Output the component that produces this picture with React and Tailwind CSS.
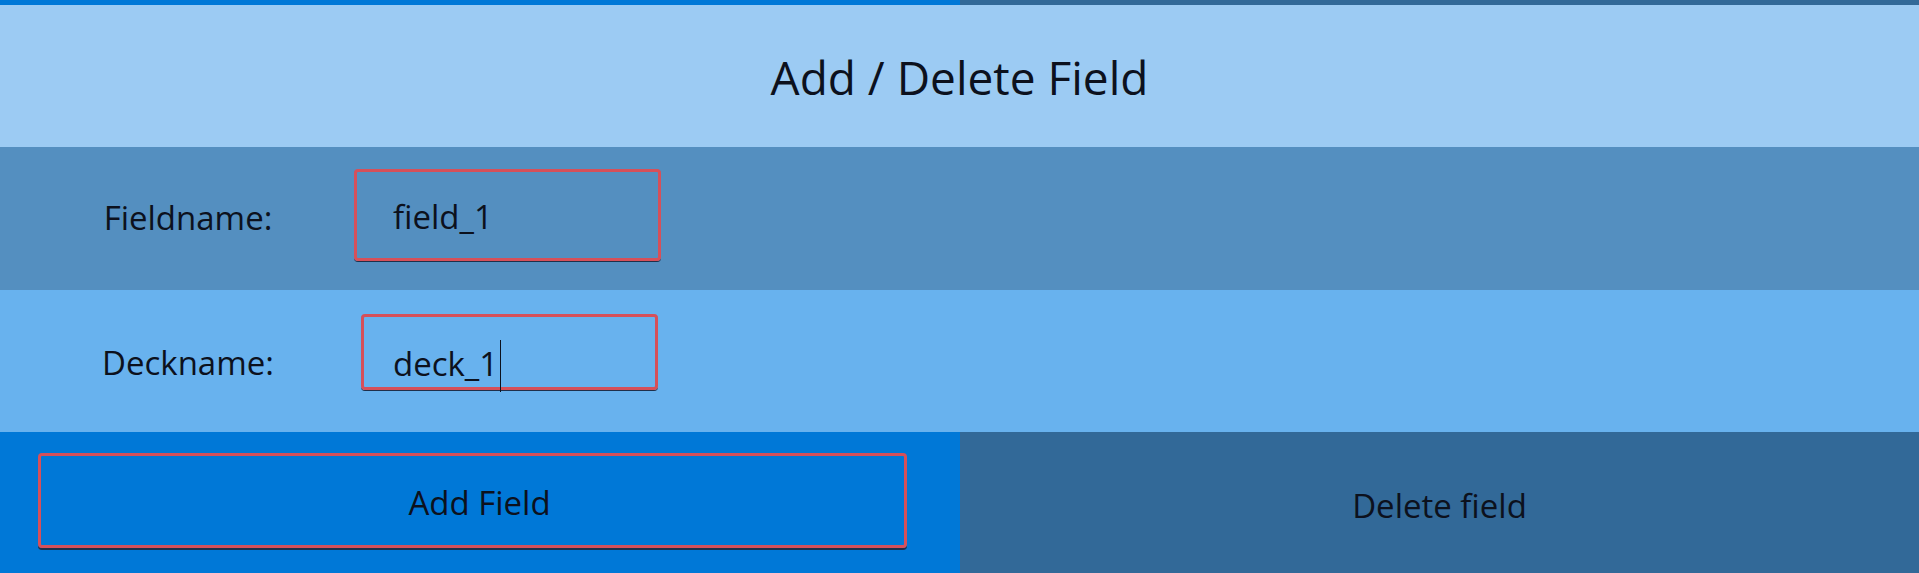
import React from "react";

export default function App() {
  return (
    <div className="w-[1919px] h-[573px] flex flex-col overflow-hidden font-['Open_Sans',sans-serif] text-[#0c111d]">
      <div className="flex h-[5px] shrink-0">
        <div className="w-[960px] bg-[#0078d7]" />
        <div className="flex-1 bg-[#326998]" />
      </div>

      <div className="h-[142px] shrink-0 bg-[#9ccbf3] flex items-center justify-center pt-[2px] text-[46px] leading-none">
        Add / Delete Field
      </div>

      <div className="h-[143px] shrink-0 bg-[#548fc0] flex items-start">
        <div className="w-[354px] pl-[22px] self-center text-center text-[33px] leading-none -mt-[2px]">
          Fieldname:
        </div>
        <div className="mt-[22px] w-[307px] h-[92px] border-[3px] border-[#d6505a] rounded-[4px] shadow-[0_1px_0_#1f2f4a] flex items-center pl-[36px] pt-[2px] text-[33px] leading-none">
          field_1
        </div>
      </div>

      <div className="h-[142px] shrink-0 bg-[#68b2ee] flex items-start">
        <div className="w-[354px] pl-[22px] self-center text-center text-[33px] leading-none mt-[2px]">
          Deckname:
        </div>
        <div className="ml-[7px] mt-[24px] w-[297px] h-[76px] border-[3px] border-[#d6505a] rounded-[4px] shadow-[0_1px_0_#1f2f4a] flex items-center pl-[29px] pt-[22px] text-[33px] leading-none">
          <span>deck_1</span>
          <span className="inline-block w-px h-[52px] bg-[#0c111d] ml-[2px] mt-[6px]" />
        </div>
      </div>

      <div className="flex flex-1">
        <div className="w-[960px] bg-[#0078d7] pt-[21px] pl-[38px] pr-[53px] pb-[25px] flex">
          <div className="flex-1 border-[3px] border-[#d6505a] rounded-[4px] shadow-[0_2px_0_#1f2f4a] flex items-center justify-center pl-[14px] pt-[4px] text-[33px] leading-none">
            Add Field
          </div>
        </div>
        <div className="flex-1 bg-[#326998] flex items-center justify-center pt-[6px] text-[33px] leading-none">
          Delete field
        </div>
      </div>
    </div>
  );
}
